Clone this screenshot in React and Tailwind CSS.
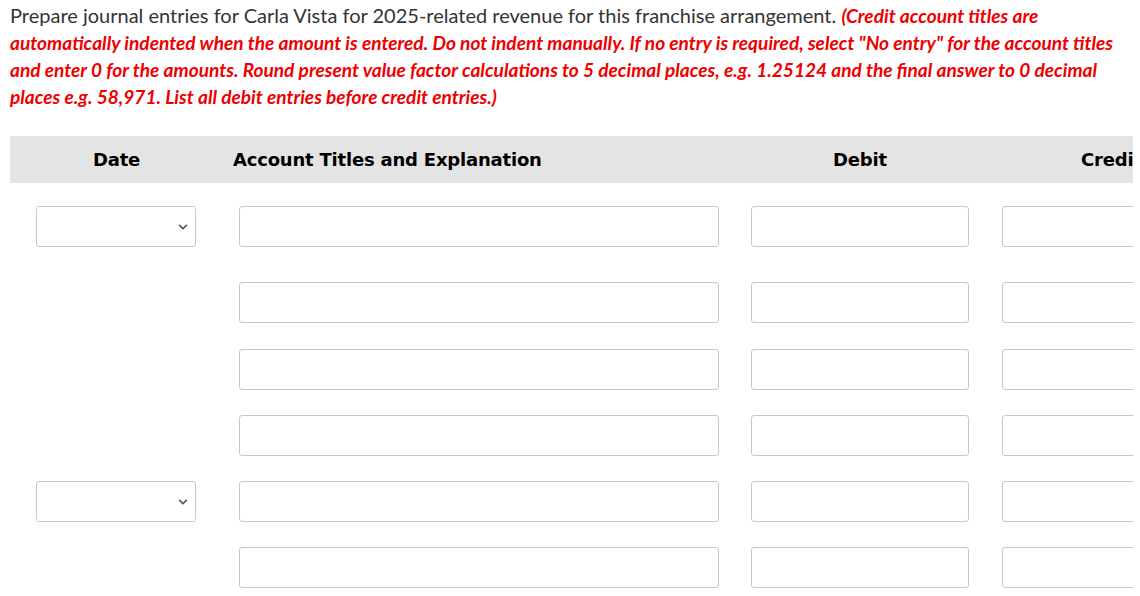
import { FaChevronDown } from "react-icons/fa";

const rows = [
  { date: true, mt: "mt-[23px]" },
  { date: false, mt: "mt-[35px]" },
  { date: false, mt: "mt-[26px]" },
  { date: false, mt: "mt-[25px]" },
  { date: true, mt: "mt-[25px]" },
  { date: false, mt: "mt-[25px]" },
];

const Box = ({ className }) => (
  <div className={`h-[41px] bg-white border border-[#c8c8c8] rounded-[3px] ${className}`} />
);

const App = () => {
  return (
    <div className="w-[1140px] h-[596px] overflow-hidden bg-white pl-[10px] pt-[2px] font-['Lato',sans-serif]">
      <p className="text-[20px] leading-[27px] pr-[8px]">
        <span className="text-[#333]">
          Prepare journal entries for Carla Vista for 2025-related revenue for this franchise arrangement.
        </span>{" "}
        <span className="text-[19.1px] text-[#ee0000] font-bold italic">
          (Credit account titles are automatically indented when the amount is entered. Do not indent manually. If no entry is required, select "No entry" for the account titles and enter 0 for the amounts. Round present value factor calculations to 5 decimal places, e.g. 1.25124 and the final answer to 0 decimal places e.g. 58,971. List all debit entries before credit entries.)
        </span>
      </p>

      <div className="w-[1123px] overflow-hidden mt-[26px]">
        <div className="flex items-center h-[47px] bg-[#e4e4e4] font-['DejaVu_Sans',sans-serif] font-bold text-[18px] text-black whitespace-nowrap tracking-[-0.2px]">
          <div className="w-[213px] shrink-0 text-center">Date</div>
          <div className="w-[503px] shrink-0 pl-[10px]">Account Titles and Explanation</div>
          <div className="w-[268px] shrink-0 text-center">Debit</div>
          <div className="pl-[87px]">Credit</div>
        </div>

        {rows.map((r, i) => (
          <div key={i} className={`flex items-center ${r.mt}`}>
            <div className="w-[229px] shrink-0 pl-[26px]">
              {r.date && (
                <div className="w-[160px] h-[41px] border border-[#c8c8c8] rounded-[3px] flex items-center justify-end pr-[7px]">
                  <FaChevronDown className="text-[#555] w-[10px] h-[10px]" />
                </div>
              )}
            </div>
            <Box className="w-[480px] shrink-0" />
            <Box className="w-[218px] shrink-0 ml-[32px]" />
            <Box className="w-[200px] shrink-0 ml-[33px]" />
          </div>
        ))}
      </div>
    </div>
  );
};

export default App;
